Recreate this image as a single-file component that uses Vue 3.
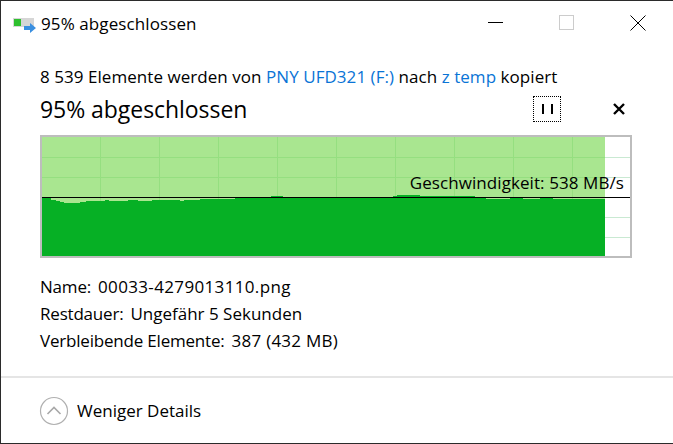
<script setup>
// top edge of the transfer rate, as [x up to which it holds, y] in window pixels
const steps = [
  [51, 197], [56, 200], [60, 201], [64, 202], [80, 203], [86, 202], [105, 201], [109, 200],
  [128, 201], [138, 200], [152, 201], [180, 200], [184, 201], [200, 200], [235, 199],
  [271, 198], [283, 196], [393, 198], [397, 196], [404, 195], [420, 195], [475, 196],
  [486, 198], [510, 199], [523, 198], [540, 199], [553, 198], [570, 199], [605, 199]
]

const left = 42
const top = 137

let rate = `M0 119`
let prev = 0
for (const [x, y] of steps) {
  rate += ` L${prev} ${y - top} L${x - left} ${y - top}`
  prev = x - left
}
rate += ` L${prev} 119 Z`

const columns = [1, 2, 3, 4, 5, 6, 7, 8, 9, 10].map((n) => n * 59 - 1)
const rows = [20, 40, 80, 100]

const details = [
  { label: 'Name:', value: '00033-4279013110.png' },
  { label: 'Restdauer:', value: 'Ungefähr 5 Sekunden' },
  { label: 'Verbleibende Elemente:', value: '387 (432 MB)' }
]
</script>

<template>
  <div class="window">
    <header class="titlebar">
      <div class="title">
        <svg class="app-icon" width="24" height="20" viewBox="0 0 24 20">
          <rect x="0" y="2" width="21" height="9" fill="#d6d6d6" />
          <rect x="1" y="3" width="7" height="7" fill="#2fc02f" />
          <path d="M11 10h6V7l6 5-6 5v-3h-6z" fill="#3a8fe0" />
        </svg>
        <span>95% abgeschlossen</span>
      </div>
      <div class="controls">
        <svg width="16" height="16" viewBox="0 0 16 16"><path d="M0 7.5h15" stroke="#000" /></svg>
        <svg width="16" height="16" viewBox="0 0 16 16"><rect x="0.5" y="0.5" width="14" height="14" fill="none" stroke="#ccc" /></svg>
        <svg width="16" height="16" viewBox="0 0 16 16"><path d="M0.5 0.5l15 15M15.5 0.5l-15 15" stroke="#000" /></svg>
      </div>
    </header>

    <main class="body">
      <p class="summary">
        8 539 Elemente werden von <span class="link">PNY UFD321 (F:)</span> nach
        <span class="link">z temp</span> kopiert
      </p>
      <div class="heading">
        <h1>95% abgeschlossen</h1>
        <button class="pause" type="button"><i></i><i></i></button>
        <svg class="cancel" width="12" height="12" viewBox="0 0 12 12">
          <path d="M1 1l10 10M11 1L1 11" stroke="#000" stroke-width="2.4" />
        </svg>
      </div>

      <div class="chart">
        <svg width="588" height="119" viewBox="0 0 588 119" shape-rendering="crispEdges">
          <g stroke="#c9e9d2">
            <path v-for="y in rows" :key="'r' + y" :d="`M0 ${y}.5H588`" />
            <path v-for="x in columns" :key="'c' + x" :d="`M${x}.5 0V119`" />
          </g>
          <rect width="563" height="119" fill="#a9e690" />
          <g stroke="#95df80">
            <path v-for="y in rows" :key="'lr' + y" :d="`M0 ${y}.5H563`" />
            <path v-for="x in columns.slice(0, 9)" :key="'lc' + x" :d="`M${x}.5 0V119`" />
          </g>
          <path :d="rate" fill="#06b025" />
          <path d="M0 60.5H588" stroke="#000" />
        </svg>
        <span class="speed">Geschwindigkeit: 538 MB/s</span>
      </div>

      <dl class="details">
        <div v-for="item in details" :key="item.label" class="detail">
          <dt>{{ item.label }}</dt>
          <dd>{{ item.value }}</dd>
        </div>
      </dl>
    </main>

    <footer class="footer">
      <svg width="30" height="30" viewBox="0 0 30 30">
        <circle cx="15" cy="15" r="13.5" fill="none" stroke="#b0b0b0" stroke-width="1.2" />
        <path d="M8.5 18l6.5-6.5 6.5 6.5" fill="none" stroke="#a8a8a8" stroke-width="1.6" />
      </svg>
      <span>Weniger Details</span>
    </footer>
  </div>
</template>

<style scoped>
.window {
  box-sizing: border-box;
  width: 673px;
  height: 444px;
  display: flex;
  flex-direction: column;
  border: 1px solid #2b2b2b;
  border-right: 0;
  background: #fff;
  color: #000;
  font-family: "Open Sans", "Noto Sans", sans-serif;
  font-size: 17px;
  overflow: hidden;
}

.titlebar {
  box-sizing: border-box;
  height: 46px;
  display: flex;
  align-items: center;
  justify-content: space-between;
  padding: 0 27px 2px 12px;
}

.title {
  display: flex;
  align-items: center;
  gap: 4px;
  letter-spacing: 0.1px;
}

.app-icon {
  margin-top: 6px;
}

.controls {
  display: flex;
  gap: 55px;
}

.body {
  flex: 1;
  padding: 19px 40px 0 39px;
}

.summary {
  margin: 0;
  line-height: 22px;
  letter-spacing: 0.05px;
  white-space: nowrap;
}

.link {
  color: #0a74d6;
}

.heading {
  display: flex;
  align-items: center;
  height: 32px;
  margin-top: 5px;
}

.heading h1 {
  flex: 1;
  margin: 0;
  font-size: 23px;
  font-weight: 400;
  letter-spacing: -0.05px;
}

.pause {
  box-sizing: border-box;
  width: 28px;
  height: 26px;
  display: flex;
  align-items: center;
  justify-content: center;
  gap: 7px;
  padding: 0;
  background: none;
  border: 1px dotted #000;
}

.pause i {
  width: 2px;
  height: 10px;
  background: #000;
}

.cancel {
  margin: 0 8px 0 52px;
}

.chart {
  position: relative;
  width: 588px;
  height: 119px;
  margin-top: 10px;
  border: 2px solid #bdbdbd;
}

.chart svg {
  display: block;
}

.speed {
  position: absolute;
  right: 6px;
  top: 34px;
  line-height: 24px;
  letter-spacing: 0.08px;
}

.details {
  margin: 15px 0 0;
}

.detail {
  display: flex;
  gap: 7px;
  height: 27px;
  align-items: center;
}

.detail dt,
.detail dd {
  margin: 0;
}

.detail dt {
  letter-spacing: -0.2px;
}

.detail:first-child dd {
  letter-spacing: 0.35px;
}

.detail:last-child dd {
  letter-spacing: 0.25px;
}

.footer {
  height: 65px;
  display: flex;
  align-items: center;
  gap: 8px;
  padding: 0 0 0 38px;
  border-top: 2px solid #e5e5e5;
}
</style>

<style>
body {
  margin: 0;
}
</style>
